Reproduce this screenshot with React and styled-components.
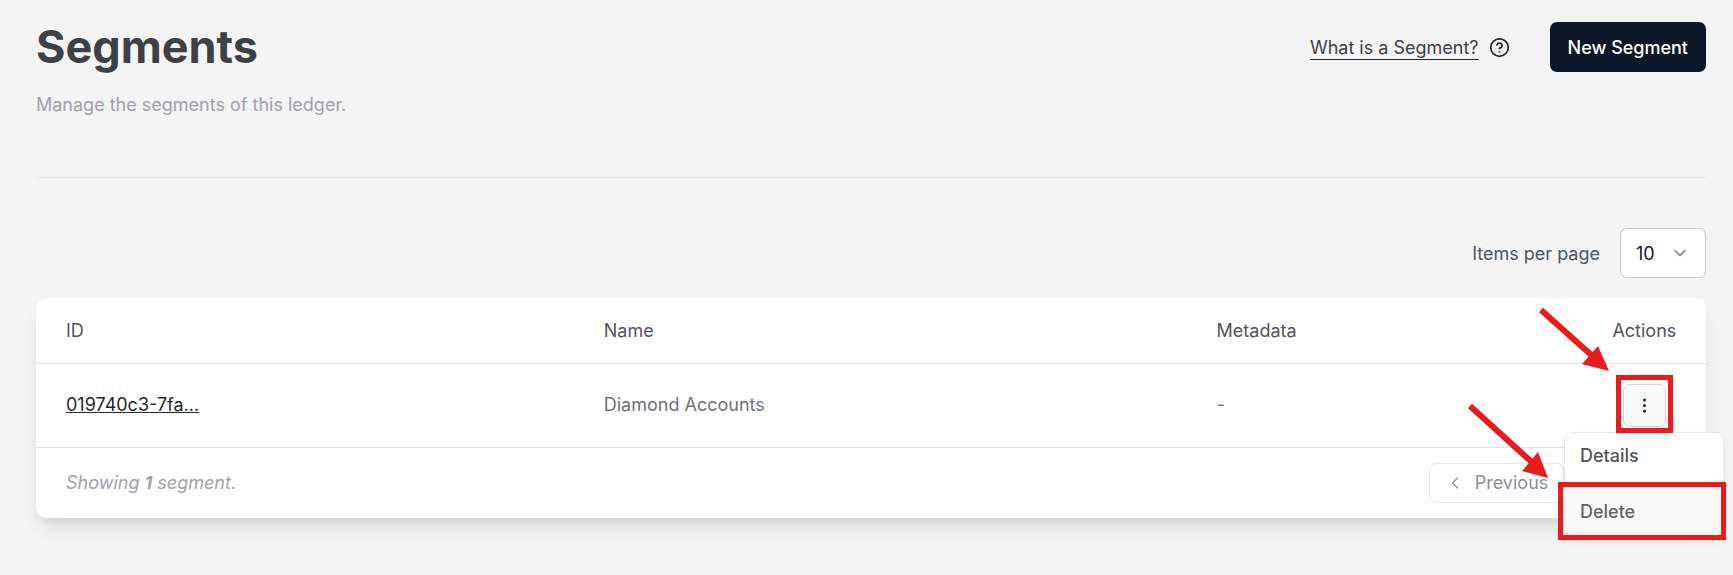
import React, { useState } from "react";
import styled, { createGlobalStyle } from "styled-components";
import {
  ChevronDown,
  ChevronLeft,
  ChevronRight,
  CircleHelp,
  EllipsisVertical,
} from "lucide-react";

const GlobalStyle = createGlobalStyle`
  * {
    box-sizing: border-box;
  }
  body {
    margin: 0;
    background: #f4f4f4;
    font-family: Inter, sans-serif;
    font-size: 18px;
    line-height: 24px;
    color: #52525b;
    overflow-x: hidden;
  }
  button, select {
    font: inherit;
    cursor: pointer;
  }
`;
const Page = styled.main`
  padding: 22px 27px 57px 36px;
`;
const Header = styled.header`
  display: flex;
  justify-content: space-between;
  align-items: flex-start;
  height: 156px;
  border-bottom: 1px solid #e5e7eb;
`;
const Title = styled.h1`
  margin: 0 0 21px;
  font-size: 45px;
  line-height: 50px;
  font-weight: 700;
  color: #3f3f46;
`;
const Subtitle = styled.p`
  margin: 0;
  color: #a1a1aa;
`;
const HeaderActions = styled.div`
  display: flex;
  align-items: center;
  gap: 40px;
`;
const Help = styled.div`
  display: flex;
  align-items: center;
  gap: 10px;
  color: #27272a;
`;
const HelpLink = styled.a`
  padding-top: 2px;
  line-height: 22px;
  color: #3f3f46;
  text-decoration: none;
  border-bottom: 1px solid #27272a;
`;
const PrimaryButton = styled.button`
  height: 50px;
  padding: 2px 18px 0;
  border: none;
  border-radius: 7px;
  background: #0f172a;
  color: white;
  font-weight: 500;
`;
const Toolbar = styled.div`
  display: flex;
  justify-content: flex-end;
  align-items: center;
  gap: 20px;
  padding: 50px 0 20px;
  color: #4b5563;
  label {
    padding-top: 2px;
  }
`;
const SelectWrapper = styled.div`
  display: grid;
  align-items: center;
  svg {
    grid-area: 1 / 1;
    justify-self: end;
    margin-right: 16px;
    color: #71717a;
    pointer-events: none;
  }
`;
const Select = styled.select`
  grid-area: 1 / 1;
  appearance: none;
  width: 86px;
  height: 50px;
  padding: 2px 15px 0;
  border: 1px solid #c7c7c7;
  border-radius: 7px;
  background: white;
  color: #0f172a;
`;
const Card = styled.section`
  background: white;
  border-radius: 10px;
  box-shadow: 0 12px 19px -4px rgba(0, 0, 0, 0.1), 0 5px 8px -5px rgba(0, 0, 0, 0.1);
`;
const Table = styled.table`
  width: 100%;
  table-layout: fixed;
  border-collapse: collapse;
`;
const HeadCell = styled.th`
  width: ${(props) => props.$width};
  height: 65px;
  padding: 2px 30px 0;
  border-bottom: 1px solid #e2e4ec;
  text-align: ${(props) => props.$align || "left"};
  font-weight: 400;
`;
const Cell = styled.td`
  height: 84px;
  padding: 0 30px;
  border-bottom: 1px solid #e2e4ec;
  color: #71717a;
`;
const IdLink = styled.a`
  color: #27272a;
`;
const RowActions = styled.div`
  position: relative;
  width: 43px;
  margin-left: auto;
  right: 10px;
`;
const KebabButton = styled.button`
  display: flex;
  align-items: center;
  justify-content: center;
  width: 43px;
  height: 43px;
  padding: 0;
  border: 1px solid #d4d4d8;
  border-radius: 7px;
  background: #f9f9f9;
  color: #27303f;
`;
const Menu = styled.div`
  position: absolute;
  z-index: 1;
  top: 48px;
  right: -58px;
  width: 160px;
  border: 1px solid #e2e8f0;
  border-radius: 9px;
  background: white;
  box-shadow: 0 5px 8px -1px rgba(0, 0, 0, 0.1);
`;
const MenuItem = styled.button`
  display: block;
  width: 100%;
  height: ${(props) => (props.$active ? "48px" : "54px")};
  padding: ${(props) => (props.$active ? "2px 15px 0" : "0 15px 8px")};
  border: none;
  border-radius: ${(props) => (props.$active ? "0 0 8px 8px" : "8px 8px 0 0")};
  background: ${(props) => (props.$active ? "#f9f9f9" : "white")};
  color: ${(props) => (props.$active ? "#63636b" : "#52525b")};
  font-weight: 500;
  text-align: left;
`;
const Highlight = styled.div`
  position: absolute;
  z-index: 2;
  top: ${(props) => props.$top}px;
  right: ${(props) => props.$right}px;
  width: ${(props) => props.$width}px;
  height: 58px;
  border: 5px solid #e81c1c;
  pointer-events: none;
`;
const Arrows = styled.svg`
  position: absolute;
  z-index: 2;
  top: -84px;
  right: 43px;
  pointer-events: none;
`;
const CardFooter = styled.footer`
  display: flex;
  justify-content: space-between;
  align-items: center;
  height: 70px;
  padding: 0 30px;
`;
const Showing = styled.p`
  margin: 0;
  color: #a1a1aa;
  font-style: italic;
`;
const Pagination = styled.nav`
  display: flex;
  gap: 10px;
`;
const PageButton = styled.button`
  display: flex;
  align-items: center;
  gap: 10px;
  height: 40px;
  padding: 0 15px;
  border: 1px solid #e8e8ea;
  border-radius: 7px;
  background: white;
  color: #8b8d98;
`;

const segments = [{ id: "019740c3-7fa...", name: "Diamond Accounts", metadata: "-" }];

function ActionsMenu() {
  return (
    <RowActions>
      <KebabButton aria-label="Open actions">
        <EllipsisVertical size={19} />
      </KebabButton>
      <Menu>
        <MenuItem>Details</MenuItem>
        <MenuItem $active>Delete</MenuItem>
      </Menu>
      <Highlight $top={-9} $right={-7} $width={57} />
      <Highlight $top={98} $right={-60} $width={168} />
      <Arrows width="163" height="184" viewBox="0 0 163 184" fill="#e81c1c">
        <path d="M81 10 L138 61" stroke="#e81c1c" strokeWidth="6" />
        <path d="M149 71 L122 64 L138 46 Z" />
        <path d="M10 106 L75 165" stroke="#e81c1c" strokeWidth="6" />
        <path d="M88 178 L62 171 L78 152 Z" />
      </Arrows>
    </RowActions>
  );
}

export default function App() {
  const [perPage, setPerPage] = useState("10");

  return (
    <>
      <GlobalStyle />
      <Page>
        <Header>
          <div>
            <Title>Segments</Title>
            <Subtitle>Manage the segments of this ledger.</Subtitle>
          </div>
          <HeaderActions>
            <Help>
              <HelpLink href="#help">What is a Segment?</HelpLink>
              <CircleHelp size={21} />
            </Help>
            <PrimaryButton>New Segment</PrimaryButton>
          </HeaderActions>
        </Header>
        <Toolbar>
          <label htmlFor="per-page">Items per page</label>
          <SelectWrapper>
            <Select
              id="per-page"
              value={perPage}
              onChange={(e) => setPerPage(e.target.value)}
            >
              <option>10</option>
              <option>50</option>
              <option>100</option>
            </Select>
            <ChevronDown size={20} strokeWidth={1.5} />
          </SelectWrapper>
        </Toolbar>
        <Card>
          <Table>
            <thead>
              <tr>
                <HeadCell $width="32.2%">ID</HeadCell>
                <HeadCell $width="36.7%">Name</HeadCell>
                <HeadCell>Metadata</HeadCell>
                <HeadCell $width="7.4%" $align="right">Actions</HeadCell>
              </tr>
            </thead>
            <tbody>
              {segments.map((segment) => (
                <tr key={segment.id}>
                  <Cell>
                    <IdLink href="#segment">{segment.id}</IdLink>
                  </Cell>
                  <Cell>{segment.name}</Cell>
                  <Cell>{segment.metadata}</Cell>
                  <Cell>
                    <ActionsMenu />
                  </Cell>
                </tr>
              ))}
            </tbody>
          </Table>
          <CardFooter>
            <Showing>
              Showing <b>{segments.length}</b> segment.
            </Showing>
            <Pagination aria-label="Pagination">
              <PageButton disabled>
                <ChevronLeft size={20} strokeWidth={1.5} />
                Previous
              </PageButton>
              <PageButton disabled>
                Next
                <ChevronRight size={20} strokeWidth={1.5} />
              </PageButton>
            </Pagination>
          </CardFooter>
        </Card>
      </Page>
    </>
  );
}
